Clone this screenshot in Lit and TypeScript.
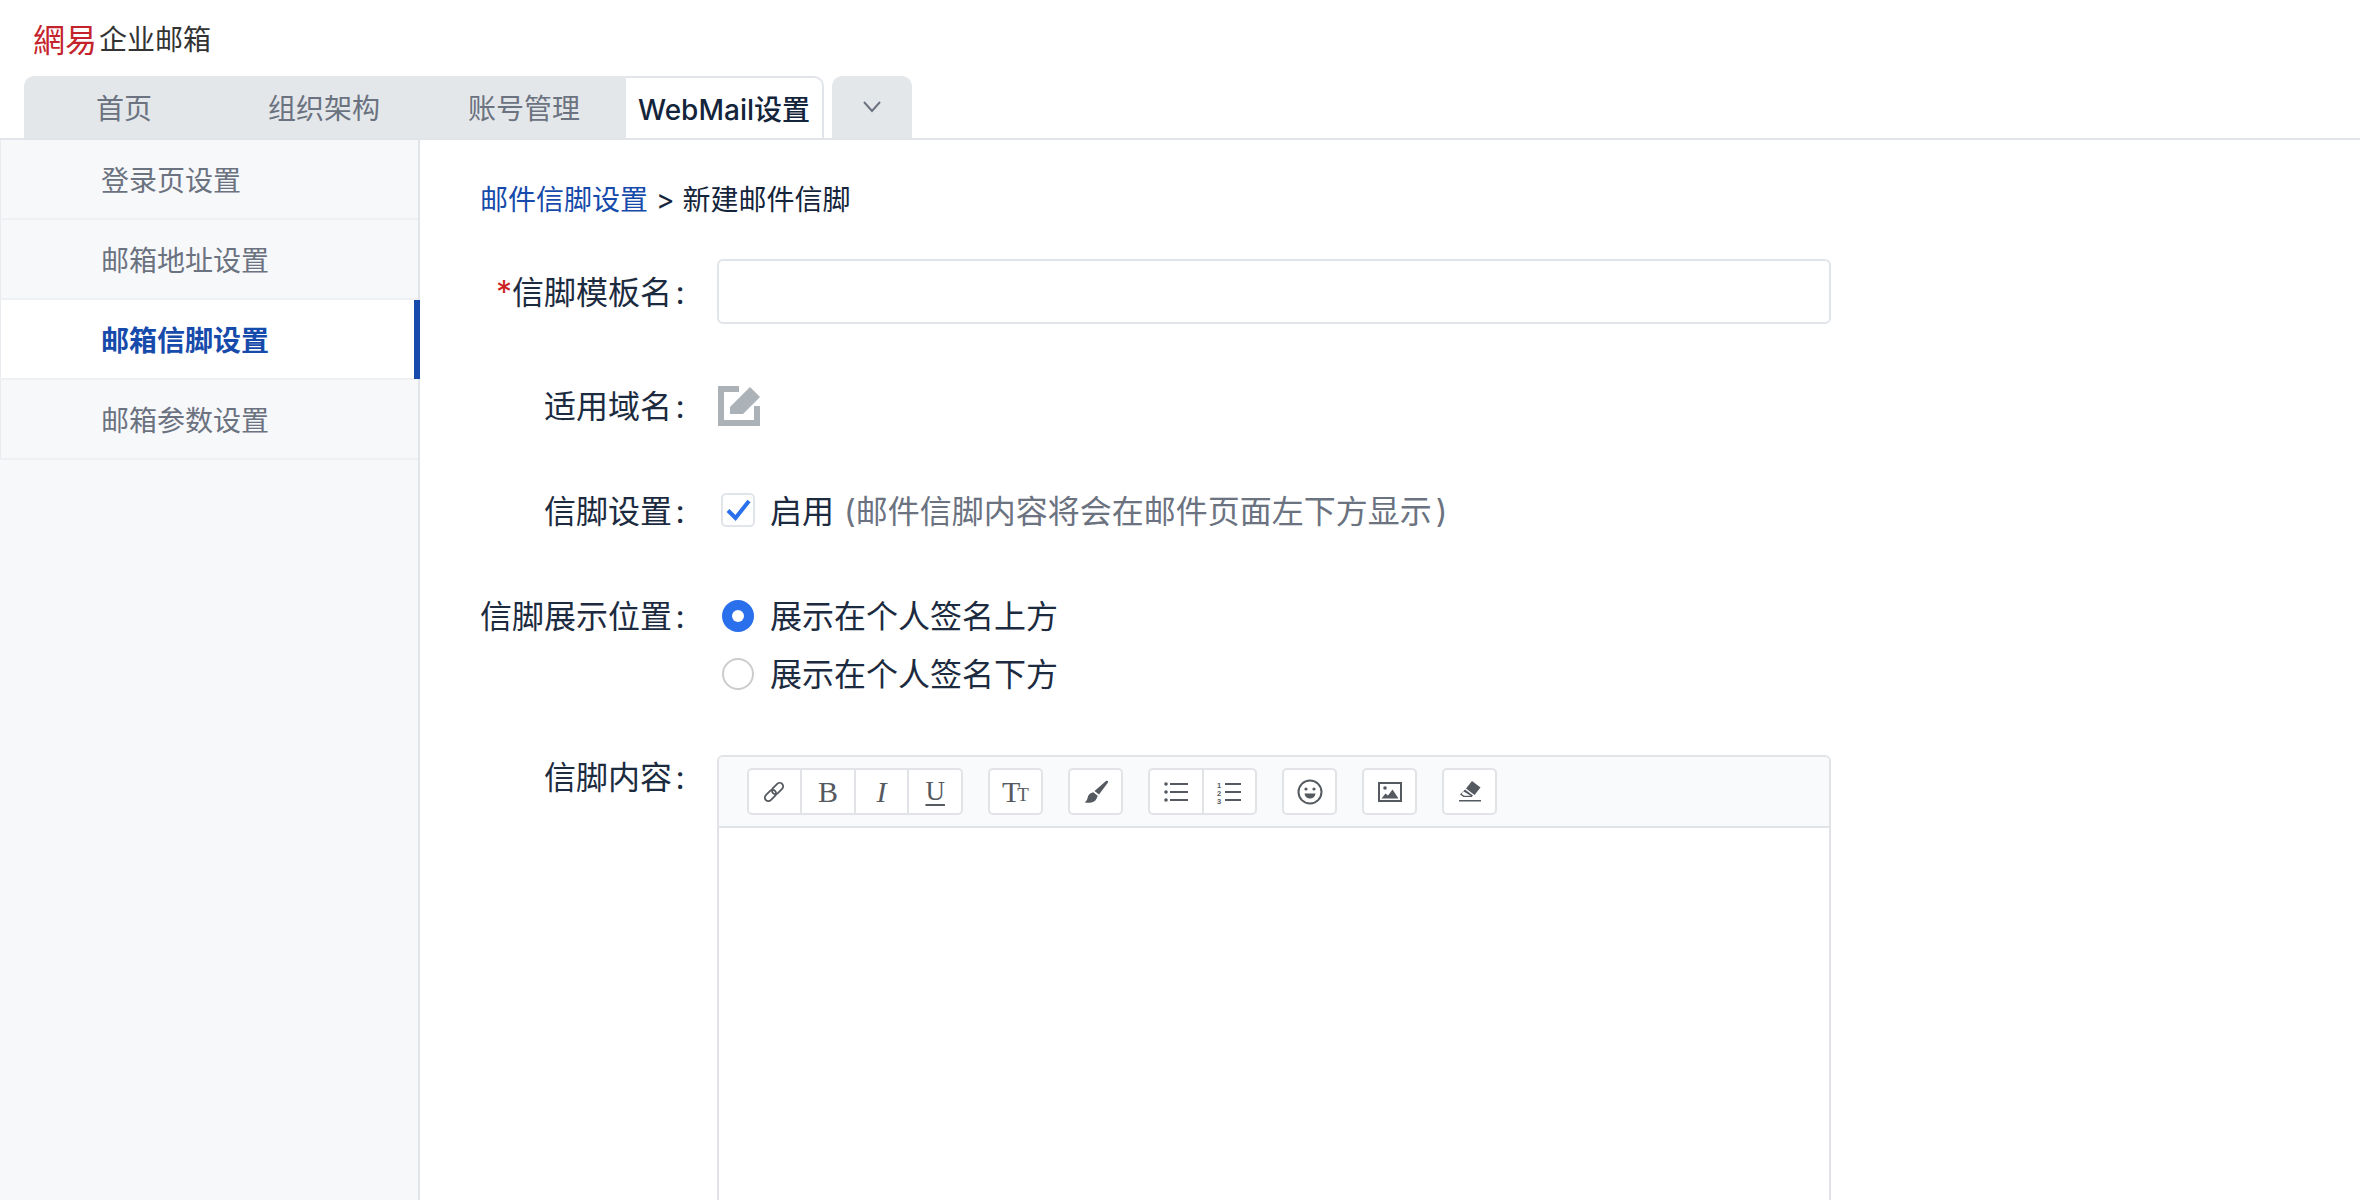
import { LitElement, html, css } from "lit";
import { customElement } from "lit/decorators.js";

const ICON = "#555a60";

const linkIcon = html`<svg width="24" height="24" viewBox="0 0 24 24" fill="none" stroke="${ICON}" stroke-width="1.800"><g transform="rotate(-45 12 12)"><rect x="0.500" y="8.500" width="13" height="7" rx="3.500"/><rect x="10.500" y="8.500" width="13" height="7" rx="3.500"/></g></svg>`;
const brushIcon = html`<svg width="28" height="28" viewBox="0 0 28 28" fill="${ICON}"><path d="M24 3c1.500-.8 2.600.4 1.800 1.800L17 16.500l-4.500-3.600z"/><path d="M11.300 14.200l4.400 3.600c-.8 3.900-3.200 6.200-6.400 6.800-2 .4-4.700.3-6.800-.3 2-1.200 2.700-2.400 3.200-4.800.6-2.900 2.500-4.700 5.600-5.300z"/></svg>`;
const ulIcon = html`<svg width="24" height="22" viewBox="0 0 24 22" fill="${ICON}"><circle cx="2" cy="3" r="1.800"/><circle cx="2" cy="11" r="1.800"/><circle cx="2" cy="19" r="1.800"/><rect x="6" y="2" width="18" height="2"/><rect x="6" y="10" width="18" height="2"/><rect x="6" y="18" width="18" height="2"/></svg>`;
const olIcon = html`<svg width="24" height="24" viewBox="0 0 24 24" fill="${ICON}"><text x="0" y="7.500" font-size="7.500" font-weight="700" font-family="Liberation Sans">1</text><text x="0" y="15.500" font-size="7.500" font-weight="700" font-family="Liberation Sans">2</text><text x="0" y="23.500" font-size="7.500" font-weight="700" font-family="Liberation Sans">3</text><rect x="8" y="3" width="16" height="2"/><rect x="8" y="11" width="16" height="2"/><rect x="8" y="19" width="16" height="2"/></svg>`;
const smileIcon = html`<svg width="26" height="26" viewBox="0 0 26 26"><circle cx="13" cy="13" r="11.500" fill="none" stroke="${ICON}" stroke-width="2"/><circle cx="9" cy="10" r="1.600" fill="${ICON}"/><circle cx="17" cy="10" r="1.600" fill="${ICON}"/><path d="M7.500 14.500h11c-.4 3.300-2.600 5-5.500 5s-5.100-1.700-5.500-5z" fill="${ICON}"/></svg>`;
const imageIcon = html`<svg width="24" height="20" viewBox="0 0 24 20"><rect x="1" y="1" width="22" height="18" fill="none" stroke="${ICON}" stroke-width="2"/><circle cx="7" cy="6" r="1.800" fill="${ICON}"/><path d="M3.500 16.500l4-5 2.500 2 4.500-6 6 9z" fill="${ICON}"/></svg>`;
const eraserIcon = html`<svg width="24" height="24" viewBox="0 0 24 24" fill="${ICON}"><path d="M14 1l8.500 6.500-6 7.500-8.500-6.500z"/><path d="M7 9.500l8 6-1.200 1.500H5.500L2 14.500zM5.200 11.200L3.700 14l2.500 1.700h6.600z"/><rect x="1" y="20" width="22" height="1.500"/></svg>`;
const editIcon = html`<svg width="42" height="40" viewBox="0 0 42 40" fill="#abb2b8"><path d="M0 0H21V6H6V34H36V20H42V40H0Z"/><path d="M12 21L32 1L42 11L25 28H12Z"/></svg>`;
const chevron = html`<svg width="18" height="12" viewBox="0 0 18 12" fill="none" stroke="#6b7280" stroke-width="2"><path d="M1 1l8 9 8-9"/></svg>`;
const check = html`<svg width="30" height="30" viewBox="0 0 30 30" fill="none" stroke="#2a6fec" stroke-width="4"><path d="M5 15.500l7.500 7.500L26 6"/></svg>`;

@customElement("app-root")
export class AppRoot extends LitElement {
  static styles = css`
    :host {
      display: block;
      height: 1200px;
      overflow: hidden;
      background: #fff;
      font-family: "Inter", "Noto Sans CJK SC", sans-serif;
      color: #1c2b40;
    }
    .logo { height: 76px; display: flex; align-items: center; padding-left: 33px; box-sizing: border-box; }
    .logo-red { font-family: "Noto Sans CJK TC", sans-serif; font-size: 32px; color: #c4232b; line-height: 1; }
    .logo-text { font-family: "Noto Sans CJK SC", sans-serif; font-size: 28px; color: #333; margin-left: 2px; line-height: 1; }
    .tabs { display: flex; padding-left: 24px; height: 64px; box-sizing: border-box; border-bottom: 2px solid #e1e5ea; }
    .tab { width: 200px; display: flex; align-items: center; justify-content: center; background: #e4e7ea; color: #6b7280; font-size: 28px; }
    .tab.first { border-top-left-radius: 10px; }
    .tab.active { box-sizing: border-box; background: #fff; color: #14243a; font-weight: 500; border-top: 2px solid #e1e5ea; border-right: 2px solid #e1e5ea; border-left: 2px solid #e4e7ea; border-top-right-radius: 10px; }
    .tab.more { width: 80px; margin-left: 8px; border-radius: 10px 10px 0 0; }
    .body { display: flex; height: 1060px; }
    .side { width: 420px; box-sizing: border-box; background: #f7f8fa; border-right: 2px solid #e1e4e8; flex: none; }
    .item { position: relative; height: 80px; box-sizing: border-box; display: flex; align-items: center; padding-left: 100px; border-left: 1px solid #e9ebf0; border-bottom: 2px solid #eef0f4; color: #6b7280; font-size: 28px; }
    .item.active { background: #fff; color: #164bab; font-weight: 700; }
    .item.active::after { content: ""; position: absolute; top: 0; bottom: -1px; right: -2px; width: 6px; background: #164bab; }
    .main { flex: 1; padding: 40px 0 0 60px; min-width: 0; }
    .crumb { font-size: 28px; line-height: 40px; color: #14243a; }
    .crumb a { color: #164bab; }
    .crumb .sep { margin: 0 8px; }
    .row { display: grid; grid-template-columns: 208px 1114px; column-gap: 29px; font-size: 32px; line-height: 47px; }
    .r1 { margin-top: 39px; align-items: center; }
    .r1 .label { margin-bottom: 2px; }
    .r2 { margin-top: 59px; align-items: center; }
    .r3 { margin-top: 61px; align-items: center; }
    .r4 { margin-top: 61px; }
    .r5 { margin-top: 60px; }
    .r5 .label { line-height: 45px; }
    .label { text-align: right; white-space: nowrap; height: 44px; }
    .label .req { color: #cc1f1f; }
    .colon { display: inline-block; width: 16px; text-align: center; }
    .input { height: 65px; box-sizing: border-box; border: 2px solid #e1e5ea; border-radius: 6px; }
    .icon-cell { padding: 3px 0 0 1px; height: 44px; box-sizing: border-box; }
    .icon-cell svg { display: block; }
    .opt { display: flex; align-items: flex-start; white-space: nowrap; height: 44px; }
    .box { width: 34px; height: 34px; box-sizing: border-box; border: 2px solid #e1e5ea; border-radius: 5px; margin: 5px 0 0 4px; display: flex; align-items: center; justify-content: center; flex: none; }
    .hint { color: #6b7280; margin-left: 8px; }
    .paren-open { padding-left: 2px; }
    .paren-close { padding-left: 4px; }
    .opt-text { margin-left: 15px; }
    .radio { width: 32px; height: 32px; border-radius: 50%; box-sizing: border-box; margin: 7px 1px 0 5px; flex: none; }
    .radio.on { background: #2a6fec; display: flex; align-items: center; justify-content: center; }
    .radio.on::before { content: ""; width: 12px; height: 12px; background: #fff; border-radius: 50%; }
    .radio.off { border: 2px solid #ccc; }
    .radios { display: flex; flex-direction: column; gap: 14px; }
    .editor { border: 2px solid #e1e3e6; border-radius: 6px 6px 0 0; height: 700px; }
    .toolbar { height: 71px; box-sizing: border-box; background: #f9fafc; border-bottom: 2px solid #e1e3e6; padding: 11px 0 0 27.500px; display: flex; gap: 25px; align-items: flex-start; border-radius: 4px 4px 0 0; }
    .group { display: flex; height: 47px; box-sizing: border-box; border: 2px solid #e1e3e6; border-radius: 5px; background: #fff; width: 55px; }
    .group.g2 { width: 109px; }
    .group.g4 { width: 216.500px; }
    .btn { flex: 1; min-width: 0; display: flex; align-items: center; justify-content: center; font-family: "Liberation Serif", serif; font-size: 26px; color: #555a60; line-height: 1; }
    .btn + .btn { border-left: 2px solid #e1e3e6; }
    .b { font-size: 30px; }
    .i { font-style: italic; font-size: 30px; }
    .u { text-decoration: underline; text-underline-offset: 4px; font-size: 27px; }
    .tt { font-size: 30px; }
    .tt small { font-size: 19px; margin-left: -3px; padding-top: 5px; }
  `;

  render() {
    const items = ["登录页设置", "邮箱地址设置", "邮箱信脚设置", "邮箱参数设置"];
    return html`
      <div class="logo"><span class="logo-red">網易</span><span class="logo-text">企业邮箱</span></div>
      <div class="tabs">
        <div class="tab first">首页</div>
        <div class="tab">组织架构</div>
        <div class="tab">账号管理</div>
        <div class="tab active">WebMail设置</div>
        <div class="tab more">${chevron}</div>
      </div>
      <div class="body">
        <aside class="side">
          ${items.map((t, i) => html`<div class="item ${i === 2 ? "active" : ""}">${t}</div>`)}
        </aside>
        <main class="main">
          <div class="crumb"><a>邮件信脚设置</a><span class="sep">&gt;</span>新建邮件信脚</div>
          <div class="row r1">
            <div class="label"><span class="req">*</span>信脚模板名<span class="colon">:</span></div>
            <div class="input"></div>
          </div>
          <div class="row r2">
            <div class="label">适用域名<span class="colon">:</span></div>
            <div class="icon-cell">${editIcon}</div>
          </div>
          <div class="row r3">
            <div class="label">信脚设置<span class="colon">:</span></div>
            <div class="opt"><span class="box">${check}</span><span class="opt-text">启用</span><span class="hint"><span class="paren-open">(</span>邮件信脚内容将会在邮件页面左下方显示<span class="paren-close">)</span></span></div>
          </div>
          <div class="row r4">
            <div class="label">信脚展示位置<span class="colon">:</span></div>
            <div class="radios">
              <div class="opt"><span class="radio on"></span><span class="opt-text">展示在个人签名上方</span></div>
              <div class="opt"><span class="radio off"></span><span class="opt-text">展示在个人签名下方</span></div>
            </div>
          </div>
          <div class="row r5">
            <div class="label">信脚内容<span class="colon">:</span></div>
            <div class="editor">
              <div class="toolbar">
                <div class="group g4">
                  <div class="btn">${linkIcon}</div>
                  <div class="btn b">B</div>
                  <div class="btn i">I</div>
                  <div class="btn u">U</div>
                </div>
                <div class="group"><div class="btn tt">T<small>T</small></div></div>
                <div class="group"><div class="btn">${brushIcon}</div></div>
                <div class="group g2">
                  <div class="btn">${ulIcon}</div>
                  <div class="btn">${olIcon}</div>
                </div>
                <div class="group"><div class="btn">${smileIcon}</div></div>
                <div class="group"><div class="btn">${imageIcon}</div></div>
                <div class="group"><div class="btn">${eraserIcon}</div></div>
              </div>
            </div>
          </div>
        </main>
      </div>
    `;
  }
}
